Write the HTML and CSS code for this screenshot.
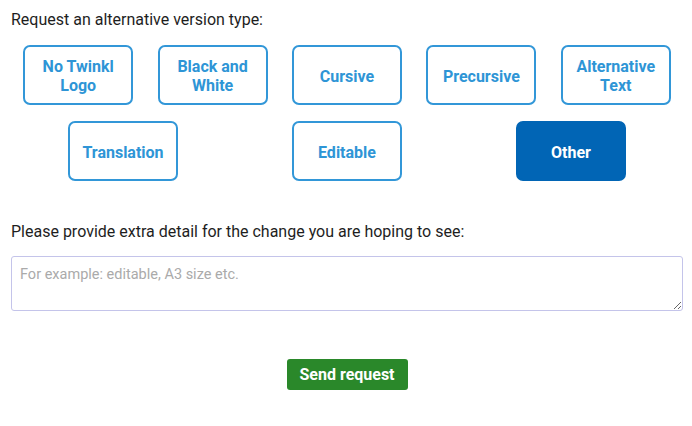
FILE: index.html
```html
<!DOCTYPE html>
<html>
<head>
<meta charset="utf-8">
<link rel="stylesheet" href="styles.css">
</head>
<body>
<div class="page">
  <p class="label">Request an alternative version type:</p>
  <div class="options">
    <div class="row">
      <button class="opt">No Twinkl<br>Logo</button>
      <button class="opt">Black and<br>White</button>
      <button class="opt">Cursive</button>
      <button class="opt">Precursive</button>
      <button class="opt">Alternative<br>Text</button>
    </div>
    <div class="row">
      <button class="opt">Translation</button>
      <button class="opt">Editable</button>
      <button class="opt active">Other</button>
    </div>
  </div>
  <p class="label label2">Please provide extra detail for the change you are hoping to see:</p>
  <textarea class="detail" placeholder="For example: editable, A3 size etc."></textarea>
  <div class="submit-wrap">
    <button class="submit">Send request</button>
  </div>
</div>
</body>
</html>
```
FILE: styles.css
```css
html, body {
  margin: 0;
  padding: 0;
  background: #fff;
}
.page {
  padding: 0 9px 0 11px;
  font-family: Roboto, "Liberation Sans", sans-serif;
}
.label {
  margin: 0;
  padding-top: 11px;
  font-size: 16px;
  line-height: 18px;
  font-weight: 400;
  color: #1e1e1e;
}
.options {
  margin-top: 16px;
  display: flex;
  flex-direction: column;
  gap: 16px;
}
.row {
  display: flex;
  justify-content: space-around;
}
.opt {
  box-sizing: border-box;
  width: 110px;
  height: 60px;
  border: 2px solid #3297d8;
  border-radius: 7px;
  background: #fff;
  color: #2e95d6;
  font-family: Roboto, "Liberation Sans", sans-serif;
  font-weight: 700;
  font-size: 16px;
  line-height: 19px;
  padding: 2px 4px 0;
  text-align: center;
}
.opt.active {
  background: #0165b5;
  border-color: #0165b5;
  color: #fff;
}
.label2 {
  padding-top: 42px;
}
.detail {
  display: block;
  box-sizing: border-box;
  margin-top: 15px;
  width: 100%;
  height: 55px;
  border: 1px solid #c4c4ea;
  border-radius: 3px;
  padding: 9px 8px;
  font-family: Roboto, "Liberation Sans", sans-serif;
  font-size: 14.5px;
  line-height: 18px;
  color: #333;
  resize: vertical;
}
.detail::placeholder {
  color: #aaa;
}
.submit-wrap {
  display: flex;
  justify-content: center;
  margin-top: 48px;
}
.submit {
  box-sizing: border-box;
  width: 121px;
  height: 31px;
  border: none;
  border-radius: 3px;
  background: #2a882a;
  color: #fff;
  font-family: Roboto, "Liberation Sans", sans-serif;
  font-weight: 700;
  font-size: 16px;
}
```
